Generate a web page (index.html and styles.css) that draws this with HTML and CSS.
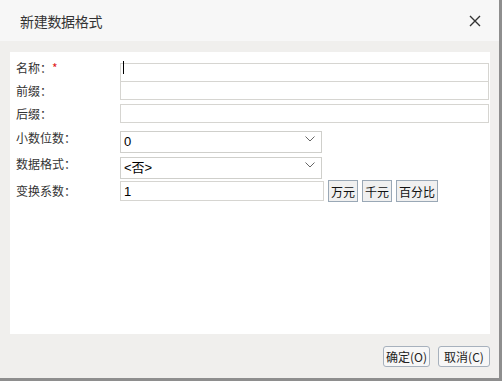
FILE: index.html
```html
<!DOCTYPE html>
<html lang="zh-CN">
  <head>
    <meta charset="UTF-8" />
    <title>新建数据格式</title>
    <link rel="stylesheet" href="styles.css">
  </head>
  <body>
    <div class="dialog">
      <div class="dialog-header">
        <span class="dialog-title">新建数据格式</span>
        <svg class="close" width="12" height="12" viewBox="0 0 12 12">
          <path d="M1 1 L11 11 M11 1 L1 11" stroke="#333" stroke-width="1.4" fill="none" />
        </svg>
      </div>

      <div class="dialog-body">
        <div class="panel">
          <div class="row r-input">
            <label class="lbl">名称：<span class="req">*</span></label>
            <div class="field wide">
              <input type="text" class="txt" />
              <span class="caret"></span>
            </div>
          </div>
          <div class="row r-input">
            <label class="lbl">前缀：</label>
            <input type="text" class="txt wide" />
          </div>
          <div class="row r-input">
            <label class="lbl">后缀：</label>
            <input type="text" class="txt wide" />
          </div>
          <div class="row r-select">
            <label class="lbl">小数位数：</label>
            <div class="sel-wrap">
              <select class="sel"><option>0</option></select>
              <svg class="chev" width="10" height="6" viewBox="0 0 10 6">
                <path d="M0.5 0.5 L5 5 L9.5 0.5" stroke="#555" stroke-width="0.9" fill="none" />
              </svg>
            </div>
          </div>
          <div class="row r-select">
            <label class="lbl">数据格式：</label>
            <div class="sel-wrap">
              <select class="sel"><option>&lt;否&gt;</option></select>
              <svg class="chev" width="10" height="6" viewBox="0 0 10 6">
                <path d="M0.5 0.5 L5 5 L9.5 0.5" stroke="#555" stroke-width="0.9" fill="none" />
              </svg>
            </div>
          </div>
          <div class="row r-factor">
            <label class="lbl">变换系数：</label>
            <input type="text" class="txt factor" value="1" />
            <button class="mini w30">万元</button>
            <button class="mini w30">千元</button>
            <button class="mini w42">百分比</button>
          </div>
        </div>
      </div>

      <div class="dialog-footer">
        <button class="btn ok">确定(O)</button>
        <button class="btn cancel">取消(C)</button>
      </div>
    </div>
  </body>
</html>
```

FILE: styles.css
```css
html,
body {
  margin: 0;
  padding: 0;
  background-color: #8e8e8e;
  font-family: "Noto Sans CJK SC", "Noto Sans", sans-serif;
}
.dialog {
  width: 499px;
  height: 378px;
  display: flex;
  flex-direction: column;
  background: #f0efed;
}
.dialog-header {
  height: 41px;
  flex: none;
  background: #f7f7f7;
  display: flex;
  align-items: center;
  padding: 0 18px 0 20px;
  justify-content: space-between;
}
.dialog-title {
  font-size: 14px;
  color: #333;
  letter-spacing: -0.3px;
}
.close {
  display: block;
  margin-top: 1px;
}
.dialog-body {
  flex: none;
  padding: 11px 9px 0 10px;
}
.panel {
  height: 282px;
  background: #ffffff;
  box-sizing: border-box;
  padding: 6px 0 0 6px;
  display: flex;
  flex-direction: column;
  gap: 4px;
}
.row {
  display: flex;
  align-items: center;
  flex: none;
}
.r-input {
  height: 19px;
}
.r-select {
  height: 22px;
}
.r-factor {
  height: 22px;
  margin-top: 1px;
}
.lbl {
  width: 104px;
  flex: none;
  font-size: 12px;
  color: #333;
  line-height: 16px;
}
.req {
  color: #e02020;
}
.field {
  position: relative;
  height: 19px;
}
.wide {
  width: 369px;
}
.txt {
  height: 19px;
  box-sizing: border-box;
  border: 1px solid #d6d5d1;
  padding: 0 3px;
  margin: 0;
  font-family: "Liberation Sans", "Noto Sans CJK SC", sans-serif;
  font-size: 13px;
  color: #000;
  outline: none;
}
.field .txt {
  width: 100%;
}
.caret {
  position: absolute;
  left: 3px;
  top: 3px;
  width: 1px;
  height: 13px;
  background: #000;
}
.sel-wrap {
  position: relative;
  width: 202px;
  height: 22px;
}
.sel {
  appearance: none;
  -webkit-appearance: none;
  width: 100%;
  height: 22px;
  box-sizing: border-box;
  border: 1px solid #cfcfcb;
  border-radius: 0;
  background: #fff;
  padding: 0 3px;
  margin: 0;
  font-family: "Liberation Sans", "Noto Sans CJK SC", sans-serif;
  font-size: 13px;
  color: #000;
  outline: none;
}
.chev {
  position: absolute;
  right: 7px;
  top: 9px;
}
.factor {
  width: 204px;
  height: 20px;
  margin-right: 4px;
}
.mini {
  height: 22px;
  box-sizing: border-box;
  border: 1px solid #9aa8b6;
  background: #f0f0f0;
  padding: 0;
  margin: 0 4px 0 0;
  font-family: "Noto Sans CJK SC", sans-serif;
  font-size: 12px;
  color: #111;
}
.w30 {
  width: 30px;
}
.w42 {
  width: 42px;
}
.dialog-footer {
  display: flex;
  justify-content: flex-end;
  gap: 8px;
  padding: 12px 9px 0 0;
}
.btn {
  height: 21px;
  box-sizing: border-box;
  border: 1px solid #a7b1bd;
  border-radius: 3px;
  background: #f7f7f7;
  padding: 0;
  font-family: "Noto Sans CJK SC", sans-serif;
  font-size: 12px;
  color: #222;
}
.ok {
  width: 47px;
}
.cancel {
  width: 52px;
}
```
